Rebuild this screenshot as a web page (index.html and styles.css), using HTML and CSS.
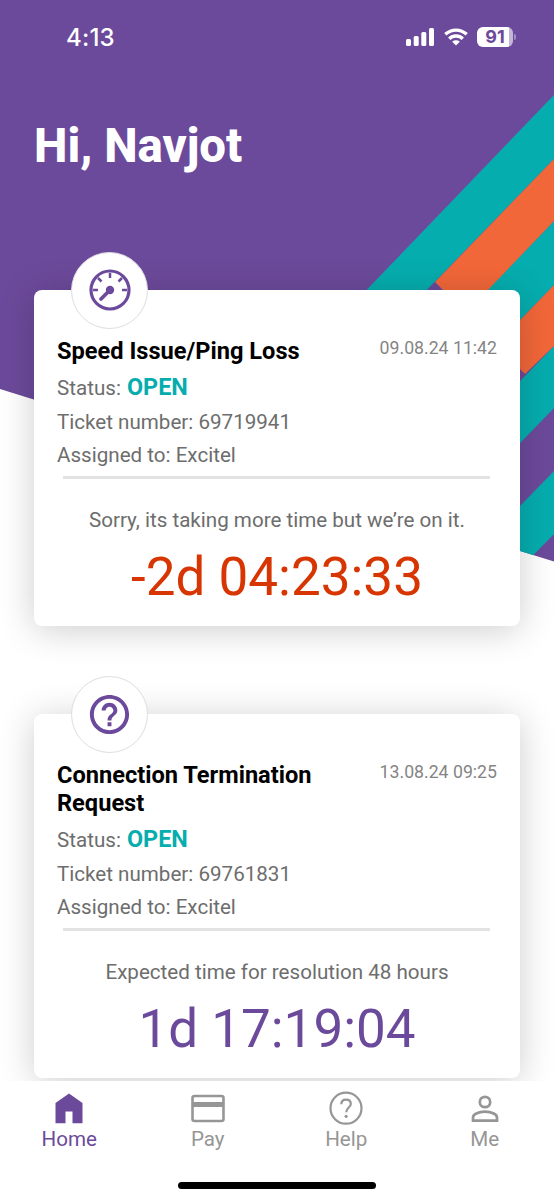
FILE: index.html
```html
<!DOCTYPE html>
<html lang="en">
<head>
<meta charset="utf-8">
<title>Home</title>
<link rel="stylesheet" href="styles.css">
</head>
<body>
<div class="app">
  <svg class="backdrop" viewBox="0 0 554 562" aria-hidden="true">
    <defs><clipPath id="hero"><path d="M0 0H554V561.500L0 389Z"/></clipPath></defs>
    <g clip-path="url(#hero)">
      <path fill="#6c4a9b" d="M0 0H554V562H0Z"/>
      <path fill="#06adae" d="M554 95V159L354 365V303Z"/>
      <path fill="#06adae" d="M554 221V285L454 388V324Z"/>
      <path fill="#f26739" d="M554 159V221L466 313L435 282Z"/>
      <path fill="#06adae" d="M554 346V408L454 511V449Z"/>
      <path fill="#f26739" d="M554 285V346L525 374L496 345Z"/>
      <path fill="#06adae" d="M554 471V534L454 636V574Z"/>
    </g>
  </svg>

  <header class="statusbar">
    <span class="clock">4:13</span>
    <div class="indicators">
      <svg width="29" height="20" viewBox="0 0 29 20" fill="#fff">
        <rect x="0" y="12" width="5" height="7" rx="1.500"/><rect x="7.700" y="9" width="5" height="10" rx="1.500"/><rect x="15.300" y="5" width="5" height="14" rx="1.500"/><rect x="23" y="1" width="5" height="18" rx="1.500"/>
      </svg>
      <svg width="24" height="20" viewBox="0 0 24 20" fill="none" stroke="#fff" stroke-width="3.300">
        <path d="M1.300 7.300A15.600 15.600 0 0 1 22.700 7.300"/><path d="M5.200 11.700A9.900 9.900 0 0 1 18.800 11.700"/>
        <path fill="#fff" stroke="none" d="M12 18.600L8.200 14.800A5.600 5.600 0 0 1 15.800 14.800Z"/>
      </svg>
      <div class="battery"><span class="battery-level">91</span><i class="battery-tip"></i></div>
    </div>
  </header>

  <h1 class="greeting">Hi, Navjot</h1>

  <main class="tickets">
    <article class="card">
      <div class="badge">
        <svg width="42" height="42" viewBox="0 0 42 42" fill="none" stroke="#6c4a9b">
          <circle cx="21" cy="21" r="19" stroke-width="3.200"/>
          <path stroke-width="2.500" d="M21 4V9M4 21H9M33 21H38M9 9L12.500 12.500M33 9L29.500 12.500"/>
          <path stroke-width="3.800" stroke-linecap="round" d="M20 22L12 30"/>
          <circle cx="21" cy="21" r="4.200" fill="#6c4a9b" stroke="none"/>
        </svg>
      </div>
      <div class="heading"><h2 class="title">Speed Issue/Ping Loss</h2><time class="date">09.08.24 11:42</time></div>
      <p class="status">Status: <b class="open">OPEN</b></p>
      <p class="number">Ticket number: 69719941</p>
      <p class="assigned">Assigned to: Excitel</p>
      <hr class="rule">
      <p class="note">Sorry, its taking more time but we’re on it.</p>
      <p class="timer late">-2d 04:23:33</p>
    </article>

    <article class="card tall">
      <div class="badge">
        <svg width="47" height="47" viewBox="0 0 24 24" fill="#6c4a9b">
          <path d="M11 18h2v-2h-2v2zm1-16C6.480 2 2 6.480 2 12s4.480 10 10 10 10-4.480 10-10S17.520 2 12 2zm0 18c-4.410 0-8-3.590-8-8s3.590-8 8-8 8 3.590 8 8-3.590 8-8 8zm0-14c-2.210 0-4 1.790-4 4h2c0-1.100.9-2 2-2s2 .9 2 2c0 2-3 1.750-3 5h2c0-2.250 3-2.500 3-5 0-2.210-1.790-4-4-4z"/>
        </svg>
      </div>
      <div class="heading"><h2 class="title">Connection Termination Request</h2><time class="date">13.08.24 09:25</time></div>
      <p class="status">Status: <b class="open">OPEN</b></p>
      <p class="number">Ticket number: 69761831</p>
      <p class="assigned">Assigned to: Excitel</p>
      <hr class="rule">
      <p class="note">Expected time for resolution 48 hours</p>
      <p class="timer">1d 17:19:04</p>
    </article>
  </main>

  <nav class="tabs">
    <div class="tab-row">
      <a class="tab active">
        <svg width="36" height="36" viewBox="0 0 36 36" fill="currentColor"><path d="M4.500 13L18 3.500L31.500 13V33.300H21.500V21.500H14.500V33.300H4.500Z"/></svg>
        <span>Home</span>
      </a>
      <a class="tab">
        <svg width="36" height="36" viewBox="0 0 36 36" fill="none" stroke="currentColor"><rect x="2.500" y="6" width="31" height="25" rx="2" stroke-width="2.600"/><path stroke-width="5" d="M2 14.500H34"/></svg>
        <span>Pay</span>
      </a>
      <a class="tab">
        <svg width="36" height="36" viewBox="0 0 36 36" fill="none" stroke="currentColor"><circle cx="18" cy="18.200" r="15.500" stroke-width="2.200"/><path stroke-width="2.200" d="M13.300 14.200C13.300 11.300 15.200 9.600 18 9.600C20.800 9.600 22.800 11.300 22.800 13.900C22.800 17.600 18.200 17.600 18.200 22.300"/><circle cx="18.100" cy="26.300" r="1.600" fill="currentColor" stroke="none"/></svg>
        <span>Help</span>
      </a>
      <a class="tab">
        <svg width="36" height="36" viewBox="0 0 36 36" fill="none" stroke="currentColor" stroke-width="2.700"><circle cx="18" cy="12" r="5.200"/><path d="M6 30.700V27.500C6 24.500 11 21.700 18 21.700S30 24.500 30 27.500V30.700Z"/></svg>
        <span>Me</span>
      </a>
    </div>
    <div class="home-indicator"></div>
  </nav>
</div>
</body>
</html>
```

FILE: styles.css
```css
* { box-sizing: border-box; }
body { margin: 0; background: #fff; font-family: Roboto, sans-serif; color: #6d6d6d; }
h1, h2, p { margin: 0; }
.app { position: relative; width: 554px; height: 1200px; overflow: hidden; display: flex; flex-direction: column; isolation: isolate; }
.backdrop { position: absolute; top: 0; left: 0; width: 554px; height: 562px; z-index: -1; }

.statusbar { height: 74px; flex: none; padding: 0 38px 0 66px; display: flex; align-items: center; justify-content: space-between; color: #fff; }
.clock { padding-top: 1px; font: 500 24px/28px Inter, sans-serif; letter-spacing: .2px; }
.indicators { display: flex; align-items: center; gap: 9px; }
.battery { display: flex; align-items: center; gap: 1px; }
.battery-level { width: 36px; height: 20px; border-radius: 6px; background: linear-gradient(90deg, #fff 32px, #c4b5d9 32px); color: #6c4a9b; font: 700 18px/20px Inter, sans-serif; text-align: center; }
.battery-tip { width: 2px; height: 6px; border-radius: 0 2px 2px 0; background: #a48fc2; }

.greeting { flex: none; margin: 44px 0 0 34px; font-size: 47.4px; line-height: 56px; font-weight: 800; color: #fff; }

.tickets { margin-top: 116px; padding: 0 34px; flex: none; height: 791px; display: flex; flex-direction: column; gap: 88px; overflow: visible; }
.card { position: relative; flex: none; height: 336px; padding: 46px 23px 0; border-radius: 8px; background: #fff; box-shadow: 0 4px 36px rgba(0, 0, 0, .2); display: flex; flex-direction: column; }
.tall { height: 364px; }
.badge { position: absolute; left: 37px; top: -38.5px; width: 77px; height: 77px; border: 1px solid #dedde2; border-radius: 50%; background: #fff; display: flex; align-items: center; justify-content: center; }
.heading { display: flex; justify-content: space-between; align-items: flex-start; }
.title { width: 270px; padding-top: 1px; font-size: 23.6px; line-height: 28px; font-weight: 700; color: #000; }
.date { padding-top: 1px; font-size: 17.7px; line-height: 23px; color: #858585; white-space: nowrap; }
.status, .number, .assigned { font-size: 20.6px; line-height: 33px; white-space: nowrap; }
.status { height: 37px; line-height: 36px; margin-top: 4px; }
.open { margin-left: 1px; font-size: 23.4px; color: #06adae; }
.rule { width: 427px; height: 3px; margin: 4px 0 0 6px; border: 0; background: #e2e2e2; }
.note { margin-top: 25px; font-size: 20.6px; line-height: 32px; text-align: center; white-space: nowrap; }
.timer { margin-top: 10px; font-size: 53px; line-height: 62px; text-align: center; white-space: nowrap; color: #6c4a9b; }
.late { color: #d73502; }

.tabs { position: relative; z-index: 2; flex: none; height: 119px; background: #fff; padding: 9px 0 0; }
.tab-row { display: grid; grid-template-columns: repeat(4, 1fr); height: 92px; }
.tab { display: flex; flex-direction: column; align-items: center; gap: 1px; color: #969696; font-size: 20.6px; line-height: 25px; }
.active { color: #6c4a9b; }
.home-indicator { width: 198px; height: 7px; margin: 0 auto; border-radius: 4px; background: #000; }
```
